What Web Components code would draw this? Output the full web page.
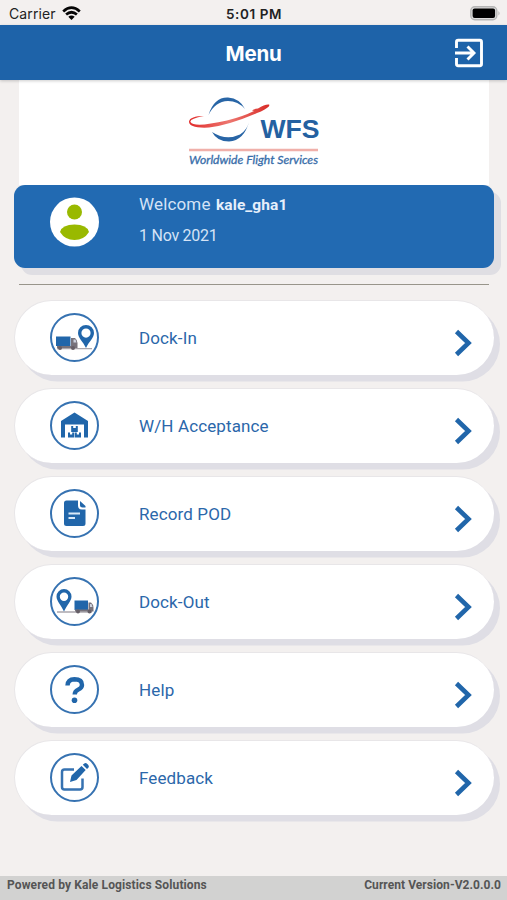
<!DOCTYPE html>
<html lang="en"><head><meta charset="utf-8"><title>Menu</title>
<style>html,body{margin:0;height:100%}body{background:#f3f0ef;overflow:hidden}</style></head>
<body><menu-screen></menu-screen>
<script>
function define(name, html) {
  const t = document.createElement('template');
  t.innerHTML = html;
  customElements.define(name, class extends HTMLElement {
    constructor() { super(); this.attachShadow({mode:'open'}).append(t.content.cloneNode(true)); }
  });
}

define('status-bar', `<style>
:host{display:grid;grid-template-columns:1fr auto 1fr;align-items:center;height:25px;box-sizing:border-box;padding:2px 6px 0 9px;font:500 13.6px/20px Inter,sans-serif;color:#222}
.l{display:flex;align-items:center;gap:6px;font-weight:400;font-size:14px;letter-spacing:.1px}
.t{font-weight:600;font-size:13.500px;letter-spacing:.6px;margin-right:2px}
.b{justify-self:end;display:block}svg{display:block}</style>
<div class="l"><span>Carrier</span><svg width="19" height="15" viewBox="0 0 19 15" fill="none" stroke="#050505" stroke-width="2.7"><path d="M1.2 5.4Q9.5-2 17.8 5.4M4.1 8.6Q9.5 3.9 14.9 8.6"/><path d="M6.3 10.8Q9.5 8 12.7 10.8L9.5 14Z" fill="#050505" stroke="none"/></svg></div>
<span class="t">5:01 PM</span>
<svg class="b" width="31" height="15" viewBox="0 0 31 15"><rect x=".8" y=".8" width="26" height="13" rx="4" fill="#dedddd" stroke="#b5b5b5" stroke-width="1.4"/><rect x="2.6" y="2.6" width="22.5" height="9.5" rx="2" fill="#000"/><path d="M28.5 5q2 2.3 0 4.6z" fill="#aaa"/></svg>`);

define('title-bar', `<style>
:host{display:grid;grid-template-columns:1fr auto 1fr;align-items:center;height:55px;box-sizing:border-box;padding:0 23px;background:#1e63a9;color:#fff;font:700 20.500px/28px Inter,sans-serif;box-shadow:0 1px 3px #0003;position:relative}
span{grid-column:2;padding-top:2px;letter-spacing:-.25px}svg{justify-self:end;display:block}</style>
<span><slot></slot></span>
<svg width="30" height="30" viewBox="0 0 30 30" fill="none" stroke="#fff" stroke-width="2.9"><path d="M2.500 10V4q0-1.700 1.700-1.700h21.600q1.700 0 1.700 1.700v22q0 1.700-1.700 1.700H4.200q-1.700 0-1.700-1.700v-6M1 15h18M13.500 8.500L20 15l-6.500 6.500"/></svg>`);

define('wfs-logo', `<style>:host{display:flex;justify-content:center;height:105px;margin:0 18px 0 19px;background:#fff}svg{display:block}</style>
<svg width="170" height="105" viewBox="0 0 170 105">
<defs><linearGradient id="r"><stop stop-color="#e12c2b"/><stop offset=".5" stop-color="#ed7770"/><stop offset="1" stop-color="#d92c28"/></linearGradient></defs>
<path d="M39.500 35Q45 17 59 17.500Q71 18.500 76 29Q69 21 59 21Q46 21.500 39.500 35Z" fill="#2865a6"/>
<path d="M43 52Q48 61.500 60 61.500Q75 60.500 80 42Q78 50 71 54.500Q57 61 43 52Z" fill="#2865a6"/>
<path d="M35 36Q20 39 21.500 42Q25 48 58 40.500Q74 36.500 85 31L83 30.500Q85 28.500 89 28.500Q96 24 100 24.500Q102 26.500 92 31.500L88 33Q60 45 40 47.500Q20 48.500 20 41.500Q21 36 35 36Z" fill="url(#r)"/>
<text x="91.500" y="58" textLength="59" lengthAdjust="spacingAndGlyphs" font-family="Liberation Sans,sans-serif" font-weight="bold" font-size="26" fill="#2461a1">WFS</text>
<path d="M20 70H149" stroke="#f0b0aa" stroke-width="2.400"/>
<text x="20" y="84" textLength="129" lengthAdjust="spacingAndGlyphs" font-family="Lato,sans-serif" font-style="italic" font-weight="400" font-size="11.500" fill="#386da9" stroke="#386da9" stroke-width=".3">Worldwide Flight Services</text></svg>`);

define('welcome-card', `<style>
:host{display:flex;align-items:flex-start;gap:40px;height:83px;box-sizing:border-box;margin:0 13px 0 14px;padding:12px 0 0 36px;border-radius:11px;background:#226ab2;box-shadow:7px 7px 0 #dfdee3;color:#d5e3f6;font:400 17px/22px Roboto,sans-serif}
svg{display:block}p{margin:0}.n{margin:-4px 0 0;letter-spacing:.15px}.n b{font-size:15.500px;letter-spacing:.1px;margin-left:1px;color:#e6effb}.d{margin-top:9px;font-size:16px;letter-spacing:-.25px}</style>
<svg width="49" height="50" viewBox="0 0 49 50"><circle cx="24.500" cy="25" r="24.500" fill="#fff"/><circle cx="24.500" cy="15" r="7.500" fill="#99b900"/><path d="M10 35Q12 27.500 24.500 27.500T39 35Q34 43 24.500 43T10 35Z" fill="#99b900"/></svg>
<div><p class="n">Welcome <b><slot name="user"></slot></b></p><p class="d"><slot name="date"></slot></p></div>`);

define('menu-item', `<style>
:host{display:flex;align-items:center;height:75px;box-sizing:border-box;padding:0 22px 1px 36px;border-radius:38px;background:#fff;border:1px solid #e8e6e8;border-width:1px 0 0 1px;box-shadow:6px 6.500px 0 #dfdee5;color:#2b67aa;font:400 17px/24px Roboto,sans-serif}
.i{box-sizing:border-box;width:49px;height:49px;border:2px solid #3672b1;border-radius:50%;display:flex;margin-left:-1px}
.t{flex:1;margin-left:40px;letter-spacing:.12px}.a{display:block;margin-top:11px}</style>
<div class="i"><slot name="icon"></slot></div><span class="t"><slot></slot></span>
<svg class="a" width="18" height="28" viewBox="0 0 18 28"><path d="M2.500 2.500L14.500 14L2.500 25.500" fill="none" stroke="#2166aa" stroke-width="4.600"/></svg>`);

// All pictograms share the 45px interior of the ring.
const icons = {
 in:`<path d="M5 33.700h35" stroke="#aaa6ac" stroke-width="1.300"/><path fill="#2166aa" d="M4 21.500h14.500v9.500H4z"/><path fill="#77727b" d="M19 23h4q2.500 2 2.500 5v5H5v-2h14z"/><path fill="#ccd2df" d="M21.500 24.500h2l1 3h-3z"/><circle cx="8" cy="33" r="2" fill="#655e66"/><circle cx="21" cy="33" r="2" fill="#655e66"/><path fill="#2166aa" fill-rule="evenodd" d="M34 10a8 8 0 0 0-8 8c0 5 5 8.500 8 15 3-6.500 8-10 8-15a8 8 0 0 0-8-8zm0 3.500a4.600 4.600 0 1 1 0 9.200 4.600 4.600 0 0 1 0-9.200z"/>`,
 out:`<path d="M5 33h35" stroke="#aaa6ac" stroke-width="1.600"/><path fill="#2166aa" d="M22.500 21.500H36V31H22.500z"/><path fill="#77727b" d="M36.500 23.500H39q2.500 2 2.500 5v4H23v-2h13.500z"/><path fill="#ccd2df" d="M38 25h1.500l1 3H38z"/><circle cx="26" cy="32.500" r="2" fill="#655e66"/><circle cx="37.500" cy="32.500" r="2" fill="#655e66"/><path fill="#2166aa" fill-rule="evenodd" d="M12 10a7.500 7.500 0 0 0-7.500 7.500C4.500 22 9 26 12 32.500c3-6.500 7.500-10.500 7.500-15A7.500 7.500 0 0 0 12 10zm0 3.500a4.200 4.200 0 1 1 0 8.400 4.200 4.200 0 0 1 0-8.400z"/>`,
 house:`<path fill="#2166aa" d="M22.500 9.500L36 18v16.500H32V21.500H13v13H9V18z"/><path fill="#2166aa" d="M19.200 23h2v2h2.600v-2h2v6h-6.600zM16 29.500h2v2h2.200v-2h2v5H16zM22.800 29.500h2v2H27v-2h2v5h-6.200z"/>`,
 doc:`<path fill="#2166aa" d="M14.500 9.500H26v5q0 4 4 4h3.500v14q0 2.500-2.500 2.500H14.500Q12 35 12 32.500V12Q12 9.500 14.500 9.500zM28 10l5.500 5v1.500h-3q-2.500 0-2.500-2z"/><path d="M16.500 22.500h11.500M16.500 27h6.500" stroke="#d9e9f8" stroke-width="1.800"/>`,
 help:`<path d="M15.500 18.500q.3-6 7-6.200 7.500 0 7.500 5.600 0 2.800-3.800 4.700-3.500 1.700-3.500 4.900" fill="none" stroke="#2166aa" stroke-width="4.400"/><circle cx="22.500" cy="33.300" r="2.800" fill="#2166aa"/>`,
 edit:`<path d="M22 14.500H12.500Q10 14.500 10 17v15q0 2.500 2.500 2.500H28q2.500 0 2.500-2.500v-8.500" fill="none" stroke="#3672b1" stroke-width="2.500"/><path fill="#2166aa" d="M18 27l1.500-6.500L29.500 11l4.200 4L24.500 25zM30.800 9.700l1.500-1.300q1.500-1 3 .5l.8.800q1.500 1.500.3 3L35 14z"/>`
};
customElements.define('menu-icon', class extends HTMLElement {
  constructor(){ super(); this.attachShadow({mode:'open'}); }
  connectedCallback(){ this.shadowRoot.innerHTML = `<style>:host{display:block;width:45px;height:45px}svg{display:block}</style><svg width="45" height="45" viewBox="0 0 45 45">${icons[this.getAttribute('kind')]}</svg>`; }
});

define('app-footer', `<style>:host{display:flex;justify-content:space-between;height:24px;box-sizing:border-box;padding:0 6px 0 7px;background:#d2d2d1;color:#555;font:700 12px/18px Roboto,sans-serif}.a{letter-spacing:.12px}.b{letter-spacing:.06px}</style>
<span class="a"><slot name="left"></slot></span><span class="b"><slot name="right"></slot></span>`);

const rows = [['in','Dock-In'],['house','W/H Acceptance'],['doc','Record POD'],['out','Dock-Out'],['help','Help'],['edit','Feedback']];
define('menu-screen', `<style>
:host{display:flex;flex-direction:column;width:507px;height:900px;background:#f3f0ef}
hr{border:0;height:1px;background:#98958b;margin:16px 18px 0 19px;flex:none}
nav{display:flex;flex-direction:column;gap:13px;margin:15px 13px 0 14px}app-footer{margin-top:auto}</style>
<status-bar></status-bar><title-bar>Menu</title-bar><wfs-logo></wfs-logo>
<welcome-card><span slot="user">kale_gha1</span><span slot="date">1 Nov 2021</span></welcome-card><hr>
<nav>${rows.map(([k,t])=>`<menu-item><menu-icon slot="icon" kind="${k}"></menu-icon>${t}</menu-item>`).join('')}</nav>
<app-footer><span slot="left">Powered by Kale Logistics Solutions</span><span slot="right">Current Version-V2.0.0.0</span></app-footer>`);
</script></body></html>
